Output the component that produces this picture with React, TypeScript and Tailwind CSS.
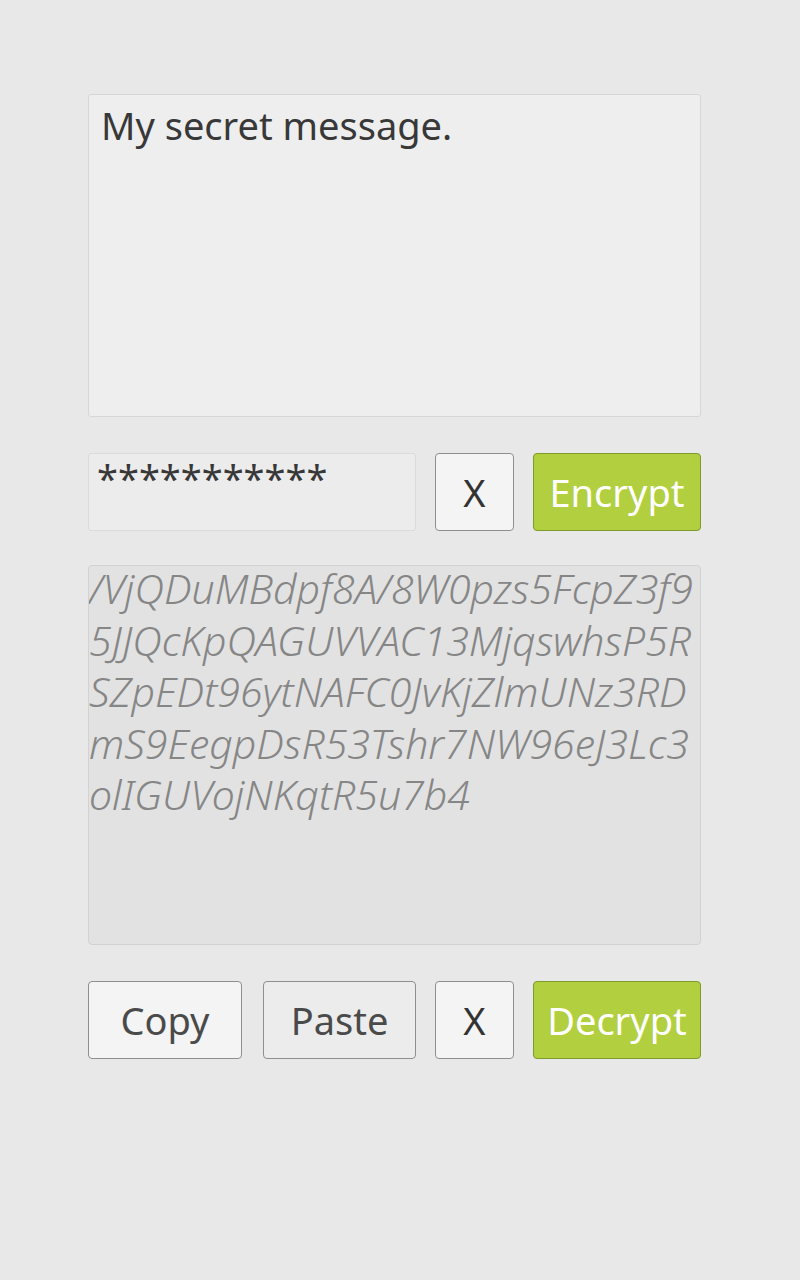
import React from "react";

const font = { fontFamily: '"Noto Sans", "Open Sans", sans-serif' };

const lines = [
  "/VjQDuMBdpf8A/8W0pzs5FcpZ3f9",
  "5JJQcKpQAGUVVAC13MjqswhsP5R",
  "SZpEDt96ytNAFC0JvKjZlmUNz3RD",
  "mS9EegpDsR53Tshr7NW96eJ3Lc3",
  "olIGUVojNKqtR5u7b4",
];

export default function App() {
  return (
    <div className="min-h-[1280px] w-[800px] bg-[#e8e8e8] pt-[94px]" style={font}>
      <div className="ml-[88px] flex w-[613px] flex-col">
        <div className="h-[323px] rounded-[3px] border border-[#d6d6d6] bg-[#eeeeee] px-[12px] pt-[8px] text-[38px] leading-[44px] text-[#383838]">
          My secret message.
        </div>
        <div className="mt-[36px] flex h-[78px] gap-[19px]">
          <div className="w-[328px] rounded-[3px] border border-[#dadada] bg-[#ececec] px-[8px] pt-[2px] text-[38px] leading-[44px] text-[#383838]">
            ***********
          </div>
          <button className="flex w-[79px] items-center justify-center rounded-[4px] border border-[#8f8f8f] bg-[#f4f4f4] text-[38px] text-[#333333]">
            X
          </button>
          <button className="flex flex-1 items-center justify-center rounded-[4px] border border-[#7d9a2a] bg-[#b2cf3f] text-[38px] text-white">
            Encrypt
          </button>
        </div>
        <div className="mt-[34px] h-[380px] overflow-hidden rounded-[4px] border border-[#d2d2d2] bg-[#e2e2e2] text-[41px] font-light italic leading-[51.5px] text-[#868686]">
          <div className="-mt-[3px]">
            {lines.map((l) => (
              <div key={l} className="whitespace-nowrap">
                {l}
              </div>
            ))}
          </div>
        </div>
        <div className="mt-[36px] flex h-[78px]">
          <button className="flex w-[154px] items-center justify-center rounded-[4px] border border-[#8f8f8f] bg-[#f4f4f4] text-[38px] text-[#4a4a4a]">
            Copy
          </button>
          <button className="ml-[21px] flex w-[153px] items-center justify-center rounded-[4px] border border-[#8f8f8f] bg-[#ececec] text-[38px] text-[#4a4a4a]">
            Paste
          </button>
          <button className="ml-[19px] flex w-[79px] items-center justify-center rounded-[4px] border border-[#8f8f8f] bg-[#f4f4f4] text-[38px] text-[#333333]">
            X
          </button>
          <button className="ml-[19px] flex flex-1 items-center justify-center rounded-[4px] border border-[#7d9a2a] bg-[#b2cf3f] text-[38px] text-white">
            Decrypt
          </button>
        </div>
      </div>
    </div>
  );
}
